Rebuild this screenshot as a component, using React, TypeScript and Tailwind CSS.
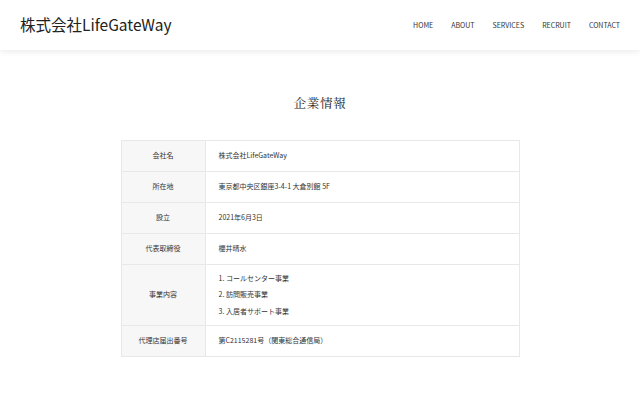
const NAV = ['HOME', 'ABOUT', 'SERVICES', 'RECRUIT', 'CONTACT']

const ROWS: {label: string; value: React.ReactNode; tall?: boolean}[] = [
  {label: '会社名', value: '株式会社LifeGateWay'},
  {label: '所在地', value: '東京都中央区銀座3-4-1 大倉別館 5F'},
  {label: '設立', value: '2021年6月3日'},
  {label: '代表取締役', value: '櫻井晴水'},
  {
    label: '事業内容',
    tall: true,
    value: (
      <div className="flex flex-col gap-[6px]">
        <span>1. コールセンター事業</span>
        <span>2. 訪問販売事業</span>
        <span>3. 入居者サポート事業</span>
      </div>
    ),
  },
  {label: '代理店届出番号', value: '第C2115281号（関東総合通信局）'},
]

export default function App() {
  return (
    <div className="w-[640px] h-[400px] bg-white text-[#333] overflow-hidden" style={{fontFamily: '"Noto Sans CJK JP", "Noto Sans", sans-serif'}}>
      {/* ヘッダー */}
      <header className="h-[50px] flex items-center justify-between pl-[20px] pr-[20px] bg-white shadow-[0_2px_6px_rgba(0,0,0,0.08)] relative">
        <h1 className="text-[15.5px] text-[#222] leading-none">株式会社LifeGateWay</h1>
        <nav className="flex gap-[18px] text-[7px] text-[#333]">
          {NAV.map(n => (
            <span key={n}>{n}</span>
          ))}
        </nav>
      </header>

      {/* 企業情報 */}
      <main className="flex flex-col items-center pt-[47px]">
        <h2 className="text-[12.5px] text-[#222] leading-none tracking-[0.05em]" style={{fontFamily: '"Noto Serif CJK JP", serif'}}>
          企業情報
        </h2>
        <div className="mt-[30px] w-[399px] border border-[#e8e8e8] text-[7px] text-[#333]">
          {ROWS.map((r, i) => (
            <div key={r.label} className={`flex ${i > 0 ? 'border-t border-[#e8e8e8]' : ''} ${r.tall ? 'h-[61px]' : i === 0 ? 'h-[30px]' : 'h-[31px]'}`}>
              <div className="w-[84px] shrink-0 bg-[#f7f7f7] border-r border-[#e8e8e8] flex items-center justify-center">{r.label}</div>
              <div className="flex items-center pl-[13px]">{r.value}</div>
            </div>
          ))}
        </div>
      </main>
    </div>
  )
}
